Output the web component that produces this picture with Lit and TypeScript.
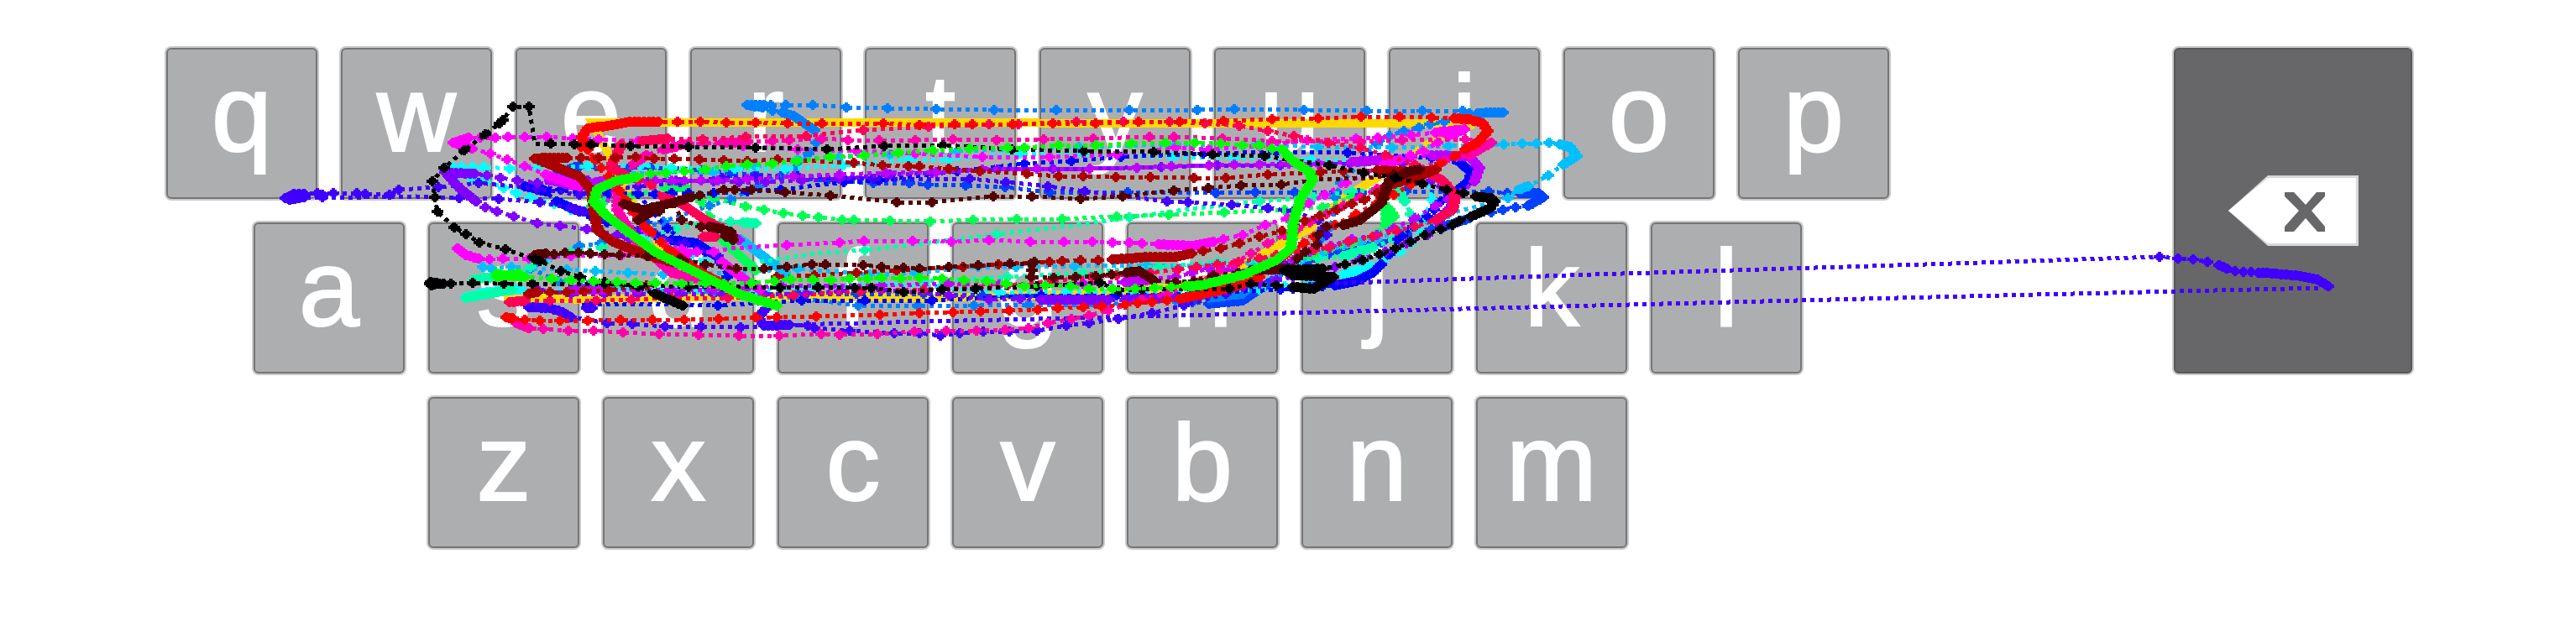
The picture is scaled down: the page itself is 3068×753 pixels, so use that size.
import { LitElement, html, svg, css } from "lit";
import { customElement } from "lit/decorators.js";

interface Row {
  name: string;
  keys: string;
}

interface Trace {
  color: string;
  paths: string[];
}

const ROWS: Row[] = [
  { name: "top", keys: "qwertyuiop" },
  { name: "home", keys: "asdfghjkl" },
  { name: "bottom", keys: "zxcvbnm" },
];

// Target word shape, drawn under the recorded gestures.
const GUIDE =
  "M600 354L700 357L860 353L1110 355L1300 350L1400 342L1450 330L1500 305L1560 272L1600 236L1640 212L1715 163L1747 151L1742 147L705 146L722 178L745 225L765 260L795 306L830 330";

// Recorded gestures. A plain point carries a sample mark, "~" is a slow
// stretch sampled densely, "-" is a fast stretch with no sample at its end.
const TRACES: Trace[] = [
  { color: "#0040ff", paths: [
    "665,205 ~690,198 710,198 730,199 750,199 775,200 800,200 835,203 870,206 900,208 930,210 985,215 1040,218 1083,218 1105,220 1150,221 1197,223 1250,229 1343,229 1448,230 1495,229 1542,229 1618,230 1674,228 1737,228 1773,228 1795,230 1810,230 ~1832,230 ~1838,235 ~1820,245 1805,247 1790,250 1776,253 1750,260 ~1720,270 1705,273 1690,275 1675,280 1660,285 1645,289 1630,293 1612,297 1595,300 1582,303 1570,306 ~1555,310 1535,320 1515,335 ~1480,358 ~1440,362 1420,360 1400,358 1350,355 1300,354 1240,353 1170,352 1100,350 1020,350 950,350 850,350",
    "665,205 ~680,211 700,225 712,230 725,236 738,240 750,245 760,255 770,265 780,278 790,290 805,301 820,312 835,323 850,335",
  ] },
  { color: "#0080ff", paths: [
    "890,125 ~910,125 918,125 936,125 968,125 1008,128 1057,129 1115,130 1184,131 1258,131 1345,131 1426,131 1470,130 1553,131 1628,132 1694,132 1742,132 1750,135 1760,135 ~1770,134 ~1790,134",
    "890,125 ~908,128 920,132 932,134 ~945,138 ~970,155 972,170 963,183 948,200 903,222 870,238 845,245 790,264 715,290 690,293 650,310 632,320 665,335 700,340 775,346 850,348 900,351 950,355 1022,364 1093,364 1160,364 1225,363 1310,363 1400,358 1440,355 ~1480,350 1500,342 1520,333 1540,316 1560,300 1573,285 1585,270 1590,250 1590,235 1597,218 1625,190 1640,172 1655,162 1672,156 1690,152 1703,148 1720,145 1745,140",
  ] },
  { color: "#00bfff", paths: [
    "575,318 585,320 609,318 630,320 675,321 709,323 748,325 790,327 870,325 950,320 1035,327 1090,325 1165,318 1210,318 1280,317 1366,316 1440,317 1490,313 1550,310 1575,302 1600,292 1620,289 1640,285 1670,274 1700,262 1725,255 1796,236 -1808,226 ~1820,222 1844,209 1862,196 ~1878,186 ~1870,175 ~1858,172 1845,170 1830,171 1813,171 1791,172 1725,174 1658,176 1570,175 1500,172 1400,172 1285,175 1140,180 1060,184 1000,187 950,190 900,198 850,205 795,206 740,207",
    "882,285 ~935,325",
  ] },
  { color: "#00ffff", paths: [
    "540,199 550,199 563,199 576,199 607,201 640,199 700,198 763,197 800,200 875,201 935,201 1004,197 1082,190 1130,190 1215,183 1290,184 1396,187 1470,188 1562,190 1640,192 1700,215 1706,238 1695,260 1690,275 1680,290 1668,300 1650,308 1633,317 ~1600,327 1580,332 ~1560,336 1530,341 1500,345 1430,347 1350,347 1270,348 1190,348 1120,342 1050,338 970,342 900,346 830,345 760,344 700,345 620,345 ~580,348 ~555,354",
    "532,204 545,208 562,213 577,214 600,224 615,230 631,235 660,243 680,250 710,255 740,270 770,282 800,290 820,304 840,312",
  ] },
  { color: "#00ffaa", paths: [
    "555,355 ~570,352 ~610,345",
    "565,333 ~600,328 632,318 680,300 717,295 805,273 -850,262 870,264 885,265 ~900,266",
    "850,335 -905,312 -972,302 1030,298 -1100,290 1187,279 -1270,270 1345,259 -1425,248 1500,240 1565,235 1610,228 1665,225 ~1673,240 1680,255 1690,265 1660,285 1635,295 ~1600,305 1570,308 1540,310 1500,311 1450,312 1380,318 1290,325 1200,330 1100,335",
  ] },
  { color: "#00ff55", paths: [
    "700,250 720,240 750,235 800,220 820,230 850,236 888,246 910,250 933,254 956,257 975,259 1003,262 1017,262 1060,263 1108,264 1159,262 1211,261 1265,261 1330,258 1392,256 1458,253 1530,250 1575,247 1610,235",
    "1648,243 ~1655,250 ~1660,258 ~1650,268 1640,278 1610,290 1560,305 1500,320",
    "1650,250 ~1652,266",
    "795,225 ~815,222 835,240 845,258 850,275 ~865,290 ~900,322",
  ] },
  { color: "#0000ff", paths: [
    "625,222 ~650,228 ~640,222 668,226 690,230 725,230 760,231 780,231 800,230 820,230 850,230 890,228 930,226 1005,217 1047,215 1140,204 1220,195 1276,192 1335,187 1433,183 1520,181 1605,182 1705,188 1740,195 ~1752,205 ~1750,215 ~1737,226 1726,233 1716,240 1708,250 1700,258 1683,270 1670,281 1665,285 1655,303 1645,315 ~1635,325 ~1615,335 ~1590,340 1575,341 1560,342 1540,344 1525,345 1420,350 1330,352 1240,352 1110,358 1030,358 955,358 855,364 -740,362 700,363",
    "625,222 650,228 663,240 ~690,252 705,259 723,265 750,272 780,280 800,286 ~830,290 ~850,303 860,315 870,325 885,333 900,340",
    "760,231 775,250 795,272 815,288 840,300 858,312 866,330",
  ] },
  { color: "#4000ff", paths: [
    "340,236 ~350,231 ~362,231 378,230 384,232 397,230 425,230 435,231 464,232 475,226 522,223 570,218 640,225 690,232 760,222 810,217 860,212 900,211 950,210 1040,213 1155,213 1198,217 1248,222 1292,228 1390,240 1415,241 1467,244 1510,248 1540,252 1570,262 1576,272 1580,280 1568,292 1555,300 1530,315 1500,330 1460,350 1410,364 1372,373 1332,380 1297,385 1270,388 1235,394 1202,395 1171,395 1143,397 1120,400 1095,397 1065,397 1012,394 970,391 962,388 940,387 ~910,388 ~903,378 ~912,368",
    "345,238 ~362,235 384,235 -433,235 -496,234 547,236 594,237 643,241 680,248 ~695,252 720,258 760,275 790,285 815,290 855,305",
    "630,366 ~655,367 ~670,372 ~680,378 723,385 753,386 792,389 835,389 882,390 -980,386 -1400,376 -1660,370 -1900,364 -2300,354 -2765,343",
    "1570,338 -1605,337 -1900,327 -2293,315 2572,306 2594,308 2612,309 2629,312 2643,316 ~2652,320 2662,323 2672,324 2681,324 2690,325 ~2700,325 ~2740,329 ~2760,333 ~2773,341",
    "699,367 ~705,367",
  ] },
  { color: "#8000ff", paths: [
    "530,205 ~538,206 ~565,207 580,209 596,212 616,215 640,218 670,217 700,215 730,214 760,213 805,215 850,216 880,217 912,217 955,215 1000,213 1060,208 1110,206 1188,202 1254,201 1298,201 1383,199 1450,197 1525,197 1608,195 1670,195 1705,215 1728,235 1722,252 1716,270 1700,280 1675,290 1650,300 1620,309 1590,318 1565,325 1540,330 1520,334 1500,338 1480,342 1460,346 1440,350 1420,352 1400,354 1380,355 ~1340,357 1320,357 ~1240,357 1215,356 1178,357 1130,352 1050,345 1000,347 960,350 910,350 860,350 810,350 760,350 720,350 680,350 640,345",
    "530,205 ~545,222 ~567,240 578,247 592,252 612,258 640,266 667,269 699,273 735,280 750,285 765,290 780,305 800,320 820,330 840,340",
  ] },
  { color: "#bf00ff", paths: [
    "655,215 ~690,222 ~720,215 740,215 760,215 780,215 800,215 815,215 835,215 855,215 890,213 945,210 1000,208 1055,206 1115,205 1170,202 1235,201 1298,201 1354,200 1395,198 1440,197 1470,196 1500,196 1535,195 1570,195 1610,193 ~1650,190 1680,187 1705,185 ~1750,186 ~1762,200 ~1756,216 1740,230 1725,238 1710,245 1685,260 1660,272 1640,280 1610,285 1585,293 1560,300 1540,310 1515,322 1490,322 1470,322 1455,321 1440,320 1420,325 1400,330 1370,333 ~1340,336 1290,338 1240,340 1190,339 1130,338 1050,340 990,340 930,340 890,343 850,345 800,345 760,345 720,345 ~680,345",
    "862,275 ~880,286",
  ] },
  { color: "#ff00ff", paths: [
    "540,170 ~558,164 572,164 590,164 605,163 625,163 651,163 682,165 713,166 760,168 820,171 885,174 950,178 1020,180 1090,183 1170,187 1250,187 1330,184 1400,176 1440,178 1500,174 1557,167 1615,165 1641,164 1681,161 1710,158 ~1744,154",
    "1744,154 ~1725,162 1712,170 1695,180 1680,185 1667,190 ~1650,195 1603,218 1578,232 1559,242 1533,260 1507,268 1480,280 1457,285 1445,288 ~1420,293 ~1380,291 1360,290 1345,289 1325,289 1301,288 1267,288 1227,288 1178,286 1133,288 1087,287 1029,287 1000,289 937,292 -870,296 850,300 830,300 812,297 790,290 770,275 760,260 735,245 708,230 690,222 ~650,208 625,198 604,190 584,183 562,177 ~540,170",
    "545,296 ~555,304 ~570,308 583,309 599,308 630,308 680,305 740,304 820,302",
    "860,312 ~880,328 ~905,345",
  ] },
  { color: "#ff00aa", paths: [
    "615,385 ~630,391 647,392 677,394 707,394 742,396 785,398 832,399 880,400 928,400 978,398 1000,399 1045,398 1089,395 1127,394 1163,394 1197,393 1225,391 1248,385 1276,380 1297,376 1320,370 1360,357 1390,350 1430,335 1450,325 1470,314 1490,302 1510,290 1530,280 1545,273 1560,265 1580,255 1600,245 1620,235 1640,225 1665,210 1690,200 1720,192 1750,185 ~1776,170 1745,166 1670,167 1620,169 1515,168 1456,165 1398,163 1369,163 1302,165 1243,166 1187,167 1135,166 1090,167 1047,167 1010,167 979,165 940,167 920,168 890,169 ~860,170 840,171 820,171 ~790,178 770,185 ~755,195 745,210 735,225 ~735,250 ~760,290 ~800,325 ~860,340",
  ] },
  { color: "#ff0055", paths: [
    "607,360 ~625,358 655,358 710,358 752,357 800,355 867,355 945,352 1025,347 1100,345 1200,340 1250,335 1300,330 1330,328 1370,325 1403,321 1425,318 1450,315 1475,312 1500,308 1520,304 1545,300 1565,298 1583,295 1606,288 1635,282 1663,275 1685,270 1710,262 ~1730,250 ~1733,232 ~1718,215 ~1700,205 1685,196 1650,185 1620,176 1582,170 1541,162 1510,156 1476,150 1435,147 1393,145 1338,145 1282,145 1213,148 1178,148 1106,151 1028,155 960,162 888,163 837,166 795,165 ~765,168 740,172 ~727,200 ~745,208 760,214 775,220 790,235 ~812,243 ~840,262 ~865,275",
    "838,282 ~852,282",
  ] },
  { color: "#ff0000", paths: [
    "603,378 ~610,379 625,381 643,382 667,382 700,382 739,381 777,381 815,381 856,380 900,378 925,378 972,377 1048,375 1095,373 1135,372 1168,371 1202,370 1236,369 1260,367 1290,366 1312,365 1340,363 1355,361 1372,360 1390,358 1405,356 ~1420,353 ~1470,342 ~1500,330 1515,320 1530,305 1553,290 1565,282 1590,268 1615,255 1640,242 1660,232 1680,220 1695,210 1715,195 1733,186 1745,178 ~1760,170 ~1772,156 ~1766,147 ~1750,142 ~1732,141 1705,140 1667,139 1621,139 1570,141 1515,142 1457,144 1405,145 1356,145 1305,147 1254,147 1206,148 1158,148 1137,148 1095,149 1052,147 979,147 938,147 900,146 865,146 834,145 807,145 784,145 ~750,145 ~735,148 ~700,153 ~693,163 ~700,178 708,190 716,200 725,210 737,227 745,238 755,253 768,270 775,276 787,288 797,298 ~835,325 ~865,340",
    "692,175 ~705,172",
  ] },
  { color: "#aa0000", paths: [
    "637,189 ~650,188 ~675,188 692,188 713,188 733,188 757,187 779,189 803,189 833,190 862,191 890,192 926,190 1017,194 1051,197 1082,198 1095,198 1130,201 1167,204 1223,207 1261,210 1290,210 1329,211 1370,211 1422,212 1460,212 1510,208 1573,205 1600,204 1640,203 ~1690,205 ~1710,202 ~1690,210 ~1650,222 1640,230 1625,238 1610,243 1592,250 1572,257 1554,263 1527,275 1500,282 1476,290 1454,296 1433,299 1419,302 ~1400,306 ~1370,306 ~1325,309 1308,310 1287,310 1265,311 1250,312 1189,315 1147,318 1068,322 1020,325 970,328 925,330",
    "637,189 ~660,198 ~690,210 ~705,228 ~708,255 ~712,275 ~730,288 ~770,304 ~800,312",
    "630,350 ~640,348 655,348 675,348 695,347 725,346 770,340",
  ] },
  { color: "#550000", paths: [
    "637,304 ~650,302 660,303 673,301 689,301 703,302 720,303 738,304 771,305 810,308 840,315 877,320 910,320 937,318 967,315 983,315 1028,316 1050,318 1076,319 1095,320 1130,318 1165,316 1203,314 1228,314 1232,312 1229,322 1228,330 1255,331 1281,330 1305,329 1324,327 1342,325 ~1357,323 ~1374,334 1400,336 1422,335 1445,328 1475,325 1490,322 ~1540,320 1545,308 1555,300 1568,292 1570,280 1580,270 1600,268 ~1620,262 ~1645,242 ~1655,215 ~1680,204 ~1690,202",
    "1675,205 1660,208 -1630,212 -1570,214 1526,220 1478,221 1439,224 1398,227 1337,234 1287,237 1229,234 1183,234 1110,241 1068,241 989,233 935,229 895,226 875,226 862,226 833,233 823,235 ~800,242 ~765,250 ~743,243",
    "760,262 ~780,250 785,252 803,242 812,262 835,270 845,270 ~855,272 ~870,276 ~873,286",
    "865,275 ~865,282",
  ] },
  { color: "#000000", paths: [
    "813,364 ~780,350 760,342 720,336 691,330 668,323 643,311 637,309 602,297 571,289 555,279 541,271 521,252 518,235 515,216 529,200 553,179 578,160 595,147 599,143 611,127 630,127 -637,171 656,171 684,172 704,172 751,174 820,175 900,176 985,178 1053,174 1123,173 1205,178 1291,180 1374,181 1444,184 1506,186 1583,197 1624,206 1662,212 1694,219 1723,226 1743,230 1758,234 ~1776,236 ~1780,240 ~1775,248 ~1752,258 1738,263 1730,268 1716,273 1697,280 1680,288 1662,296 1643,303 1623,310 1602,315 1575,320 ~1530,322 ~1540,328 ~1588,330 ~1565,344 ~1540,342 1520,340 1490,338 1464,344 1360,345 1332,346 1310,337 1235,341 1162,344 1122,345 1076,348 1038,343 1018,343 974,342 929,343 860,341 820,342 720,338 634,338 600,338 563,337 537,338 528,338 ~517,338 ~512,338",
    "513,336 ~520,337 ~514,340",
  ] },
  { color: "#00ff00", paths: [
    "592,326 ~600,328 ~625,330 657,332 680,334 707,335 735,336 757,337 781,337 812,338 840,337 862,338 895,337 922,335 942,333 968,333 990,334 1012,332 1033,332 1050,331 1073,332 1095,331 1122,332 1148,334 1175,335 1198,338 1220,341 1245,340 1275,341 1297,344 1325,344 1352,344 1375,343 1395,342 1412,341 ~1430,340 ~1480,328 ~1520,310 ~1538,295 ~1540,265 ~1550,235 ~1563,215 ~1560,205 ~1540,192 ~1527,178 1515,177 1500,173 1480,173 1454,171 1423,170 1388,170 1347,171 1305,173 1261,173 1220,176 1200,176 1155,177 1111,179 1070,182 1029,185 989,187 949,192 920,195 890,196 865,198 840,202 815,204 793,206 775,207 758,211 ~735,215 ~712,225 ~707,240 ~720,255 ~740,270 ~780,300 ~830,325 ~880,350 ~895,355 ~925,364",
    "592,330 ~618,326",
  ] },
];

const MARK = "m-2-6h4v2h2v2h3v4h-3v2h-2v2h-4v-2h-2v-2h-3v-4h3v-2h2z";
const DENSE_STEP = 6;

function plot(source: string): { line: string; dense: string; marks: string } {
  let line = "";
  let dense = "";
  let marks = "";
  let last: [number, number] | null = null;
  for (const token of source.split(" ")) {
    const kind = token[0];
    const [x, y] = token.replace(/^[~-]/, "").split(",").map(Number);
    line += `${last ? "L" : "M"}${x} ${y}`;
    if (kind === "~" && last) {
      const [fromX, fromY] = last;
      const count = Math.ceil(Math.hypot(x - fromX, y - fromY) / DENSE_STEP);
      dense += `M${fromX} ${fromY}L${x} ${y}`;
      for (let i = 1; i < count; i++) {
        const px = Math.round(fromX + ((x - fromX) * i) / count);
        const py = Math.round(fromY + ((y - fromY) * i) / count);
        marks += `M${px} ${py}${MARK}`;
      }
    }
    if (kind !== "-") marks += `M${x} ${y}${MARK}`;
    last = [x, y];
  }
  return { line, dense, marks };
}

@customElement("gesture-traces")
export class GestureTraces extends LitElement {
  static styles = css`
    :host {
      display: block;
    }
    .plot {
      display: block;
      width: 100%;
      height: auto;
    }
    .guide {
      fill: none;
      stroke: #ffd900;
      stroke-width: 10;
    }
    .line {
      fill: none;
      stroke: currentColor;
      stroke-width: 5;
      stroke-dasharray: 5 5;
    }
    .dense {
      fill: none;
      stroke: currentColor;
      stroke-width: 11;
      stroke-linecap: round;
    }
    .marks {
      fill: currentColor;
    }
  `;

  render() {
    return html`
      <svg class="plot" viewBox="0 0 3068 753" shape-rendering="crispEdges" aria-hidden="true">
        <path class="guide" d=${GUIDE}></path>
        ${TRACES.map(
          (trace) => svg`<g color=${trace.color}>
            ${trace.paths.map((source) => {
              const { line, dense, marks } = plot(source);
              return svg`<path class="line" d=${line}></path><path class="dense" d=${dense}></path><path class="marks" d=${marks}></path>`;
            })}
          </g>`
        )}
      </svg>
    `;
  }
}

@customElement("app-root")
export class AppRoot extends LitElement {
  static styles = css`
    :host {
      display: block;
      position: relative;
      background: #fff;
      font-family: "Liberation Sans", Arial, sans-serif;
    }
    .keyboard {
      display: flex;
      justify-content: space-between;
      align-items: flex-start;
      padding: 57px 195px 100px 198px;
    }
    .rows {
      display: flex;
      flex-direction: column;
      gap: 28px;
    }
    .row {
      display: flex;
      gap: 28px;
    }
    .home {
      padding-left: 104px;
    }
    .bottom {
      padding-left: 312px;
    }
    .key {
      box-sizing: border-box;
      display: flex;
      align-items: center;
      justify-content: center;
      width: 180px;
      height: 180px;
      margin: 0;
      padding: 0 0 24px;
      border: 2px solid #757576;
      border-radius: 6px;
      box-shadow: 0 0 0 2px #cacaca;
      background: #adaeb0;
      color: #fff;
      font-family: inherit;
      font-size: 130px;
      line-height: 1;
      -webkit-text-stroke: 2px #fff;
    }
    .backspace {
      width: 284px;
      height: 388px;
      padding: 0;
      border-color: #585859;
      background: #676769;
    }
    .icon {
      display: block;
      width: 155px;
      height: 84px;
    }
    .traces {
      position: absolute;
      inset: 0;
      pointer-events: none;
    }
  `;

  render() {
    return html`
      <main class="keyboard">
        <div class="rows">
          ${ROWS.map(
            (row) => html`<div class="row ${row.name}">
              ${[...row.keys].map((key) => html`<button class="key" type="button">${key}</button>`)}
            </div>`
          )}
        </div>
        <button class="key backspace" type="button" aria-label="Backspace">
          <svg class="icon" viewBox="0 0 155 84" aria-hidden="true">
            <path d="M0 42L47 0H155V84H47Z" fill="#d8d8d9"></path>
            <path d="M0 42L47 3H152V81H47Z" fill="#fff"></path>
            <path
              d="M67 20H78L92 35L105 20H115V25L99 42L115 61V67H106L92 51L78 67H67V61L84 42L67 25Z"
              fill="#676769"
            ></path>
          </svg>
        </button>
      </main>
      <gesture-traces class="traces"></gesture-traces>
    `;
  }
}
